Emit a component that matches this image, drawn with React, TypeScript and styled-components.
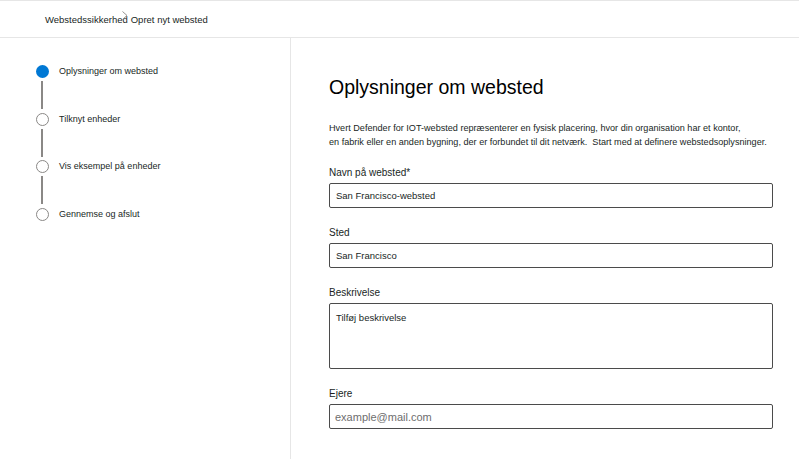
import * as React from 'react';
import styled, { createGlobalStyle } from 'styled-components';

const GlobalStyle = createGlobalStyle`
    html, body {
        margin: 0;
        padding: 0;
        background: #ffffff;
    }
    body {
        font-family: "Liberation Sans", Arial, sans-serif;
        color: #201f1e;
    }
    * {
        box-sizing: border-box;
    }
`

const Page = styled.div`
    width: 799px;
    height: 459px;
    display: flex;
    flex-direction: column;
    overflow: hidden;
`

const TopBar = styled.header`
    height: 38px;
    flex: none;
    border-top: 1px solid #e6e6e6;
    border-bottom: 1px solid #e6e6e6;
    display: flex;
    align-items: center;
    padding: 0 0 0 45px;
    font-size: 9.5px;
    color: #201f1e;
`

const Crumb = styled.span`
    white-space: nowrap;
`

const CrumbSep = styled.span`
    display: inline-flex;
    margin: -7px 3px 0 -6px;
    color: #8a8886;
`

const Body = styled.div`
    flex: 1;
    display: flex;
    min-height: 0;
`

const Sidebar = styled.nav`
    width: 291px;
    flex: none;
    border-right: 1px solid #e6e6e6;
    padding: 27px 0 0 35px;
`

const StepList = styled.ol`
    list-style: none;
    margin: 0;
    padding: 0;
`

const StepItem = styled.li`
    display: grid;
    grid-template-columns: 14px auto;
    column-gap: 10px;
    height: 47.5px;
`

const Track = styled.div`
    display: flex;
    flex-direction: column;
    align-items: center;
`

const Dot = styled.span<{ $active?: boolean }>`
    width: 13px;
    height: 13px;
    border-radius: 50%;
    flex: none;
    background: ${p => p.$active ? '#0078d4' : '#ffffff'};
    border: ${p => p.$active ? 'none' : '1.5px solid #8a8886'};
`

const Connector = styled.span`
    width: 2px;
    height: 28px;
    margin-top: 3px;
    background: #8a8886;
`

const StepLabel = styled.span`
    font-size: 9px;
    line-height: 13px;
    color: #201f1e;
    white-space: nowrap;
`

const Main = styled.main`
    flex: 1;
    padding: 37px 0 0 38px;
`

const Title = styled.h1`
    margin: 0;
    font-size: 19.5px;
    font-weight: 400;
    line-height: 24px;
    color: #000000;
`

const Intro = styled.p`
    margin: 22px 0 17px;
    font-size: 9.1px;
    line-height: 14px;
    color: #201f1e;
    white-space: nowrap;
`

const Field = styled.div`
    display: flex;
    flex-direction: column;
    gap: 3px;
    margin-bottom: 18px;
    width: 444px;
`

const Label = styled.label`
    font-size: 10px;
    line-height: 14px;
    color: #201f1e;
`

const TextBox = styled.div<{ $tall?: boolean; $placeholder?: boolean }>`
    height: ${p => p.$tall ? '66px' : '25px'};
    border: 1px solid #4b4b4b;
    border-radius: 2px;
    padding: ${p => p.$tall ? '8px 6px' : '0 6px'};
    display: flex;
    align-items: ${p => p.$tall ? 'flex-start' : 'center'};
    font-size: ${p => p.$placeholder ? '11px' : '9.5px'};
    color: ${p => p.$placeholder ? '#6e6e6e' : '#201f1e'};
    padding-left: ${p => p.$placeholder ? '5px' : '6px'};
`

const steps = [
    'Oplysninger om websted',
    'Tilknyt enheder',
    'Vis eksempel på enheder',
    'Gennemse og afslut',
];

const App = () => {
    return (
        <>
            <GlobalStyle />
            <Page>
                <TopBar>
                    <Crumb>Webstedssikkerhed</Crumb>
                    <CrumbSep>
                        <svg width="6" height="9" viewBox="0 0 6 9">
                            <path d="M0.5 0.5 L5 4.5 L0.5 8.5" fill="none" stroke="currentColor" strokeWidth="0.9" />
                        </svg>
                    </CrumbSep>
                    <Crumb>Opret nyt websted</Crumb>
                </TopBar>
                <Body>
                    <Sidebar>
                        <StepList>
                            {steps.map((s, i) => (
                                <StepItem key={s}>
                                    <Track>
                                        <Dot $active={i === 0} />
                                        {i < steps.length - 1 && <Connector />}
                                    </Track>
                                    <StepLabel>{s}</StepLabel>
                                </StepItem>
                            ))}
                        </StepList>
                    </Sidebar>
                    <Main>
                        <Title>Oplysninger om websted</Title>
                        <Intro>
                            Hvert Defender for IOT-websted repræsenterer en fysisk placering, hvor din organisation har et kontor,<br />
                            en fabrik eller en anden bygning, der er forbundet til dit netværk.&nbsp; Start med at definere webstedsoplysninger.
                        </Intro>
                        <Field>
                            <Label>Navn på websted*</Label>
                            <TextBox>San Francisco-websted</TextBox>
                        </Field>
                        <Field>
                            <Label>Sted</Label>
                            <TextBox>San Francisco</TextBox>
                        </Field>
                        <Field>
                            <Label>Beskrivelse</Label>
                            <TextBox $tall>Tilføj beskrivelse</TextBox>
                        </Field>
                        <Field>
                            <Label>Ejere</Label>
                            <TextBox $placeholder>example@mail.com</TextBox>
                        </Field>
                    </Main>
                </Body>
            </Page>
        </>
    );
};

export default App;
